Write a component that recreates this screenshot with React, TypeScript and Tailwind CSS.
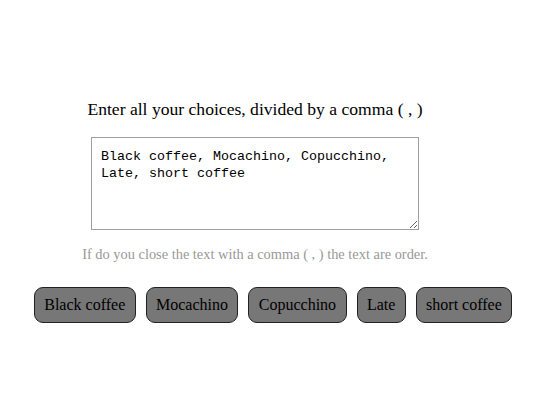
const choices = ["Black coffee", "Mocachino", "Copucchino", "Late", "short coffee"];

export default function App() {
  return (
    <div className="min-h-[407px] bg-white font-['Liberation_Serif',serif] text-black">
      <div className="w-[510px] pt-[97px] flex flex-col items-center">
        <h1 className="text-[17.6px] leading-[24px]">
          Enter all your choices, divided by a comma ( , )
        </h1>
        <textarea
          className="mt-[16px] w-[328px] h-[93px] border border-[#a0a0a0] px-[9px] pt-[10px] pb-[6px] font-['Liberation_Mono',monospace] text-[13.33px] leading-[17px] text-black resize-y outline-none"
          defaultValue="Black coffee, Mocachino, Copucchino, Late, short coffee"
        />
        <p className="mt-[15px] text-[14.4px] leading-[18px] text-[#999]">
          If do you close the text with a comma ( , ) the text are order.
        </p>
      </div>
      <div className="mt-[24px] flex justify-center gap-[10px]">
        {choices.map((c) => (
          <div
            key={c}
            className="h-[36px] px-[9.4px] flex items-center rounded-[9px] border border-[#222] bg-[#777] text-[16px]"
          >
            {c}
          </div>
        ))}
      </div>
    </div>
  );
}
